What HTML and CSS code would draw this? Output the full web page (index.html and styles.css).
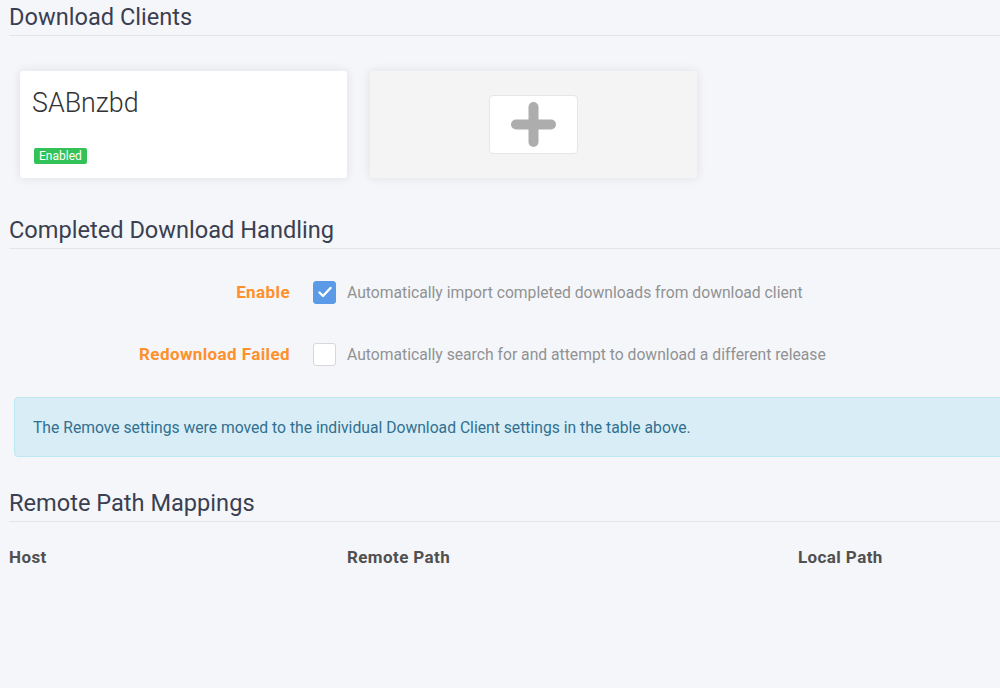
FILE: index.html
```html
<!DOCTYPE html>
<html>
<head>
<meta charset="utf-8">
<link rel="stylesheet" href="styles.css">
</head>
<body>
<div class="page">
  <section class="section">
    <h2 class="legend">Download Clients</h2>
    <div class="cards">
      <div class="card">
        <div class="card-name">SABnzbd</div>
        <span class="badge">Enabled</span>
      </div>
      <div class="card card-add">
        <div class="add-btn">
          <svg width="45" height="45" viewBox="0 0 45 45"><path d="M22.5 5 V40 M5 22.5 H40" stroke="#adadad" stroke-width="10" stroke-linecap="round" fill="none"/></svg>
        </div>
      </div>
    </div>
  </section>

  <section class="section">
    <h2 class="legend">Completed Download Handling</h2>
    <div class="form">
      <div class="row">
        <label class="label">Enable</label>
        <span class="check checked">
          <svg width="14" height="12" viewBox="0 0 14 12"><path d="M1.5 6.5 L5 10 L12.5 2" stroke="#fff" stroke-width="2.4" fill="none" stroke-linecap="round" stroke-linejoin="round"/></svg>
        </span>
        <span class="help">Automatically import completed downloads from download client</span>
      </div>
      <div class="row">
        <label class="label">Redownload Failed</label>
        <span class="check"></span>
        <span class="help">Automatically search for and attempt to download a different release</span>
      </div>
    </div>
    <div class="alert">The Remove settings were moved to the individual Download Client settings in the table above.</div>
  </section>

  <section class="section">
    <h2 class="legend">Remote Path Mappings</h2>
    <div class="table-head">
      <div class="th th-host">Host</div>
      <div class="th th-remote">Remote Path</div>
      <div class="th th-local">Local Path</div>
    </div>
  </section>
</div>
</body>
</html>
```

FILE: styles.css
```css
html, body {
  margin: 0;
  padding: 0;
  background: #f5f6fa;
  overflow: hidden;
}
body {
  font-family: Roboto, "Open Sans", sans-serif;
  color: #515253;
}
.page {
  padding-left: 9px;
  width: 1100px;
}
.legend {
  margin: 0;
  font-size: 23.6px;
  font-weight: 400;
  color: #3a3f51;
  line-height: 34px;
  border-bottom: 1px solid #e3e4e6;
  height: 36px;
  box-sizing: border-box;
}
.cards {
  display: flex;
  gap: 23px;
  padding: 35px 0 0 11px;
  height: 107px;
}
.card {
  width: 327px;
  height: 107px;
  box-sizing: border-box;
  background: #fff;
  border-radius: 3px;
  box-shadow: 0 0 10px 1px rgba(0,0,0,0.08);
  padding: 17px 12px 0 12px;
  position: relative;
}
.card-name {
  font-size: 26.8px;
  font-weight: 300;
  color: #333;
  line-height: 30px;
}
.badge {
  position: absolute;
  left: 14px;
  top: 77px;
  background: #33c257;
  color: #fff;
  font-size: 12px;
  line-height: 16px;
  padding: 0 5px;
  border-radius: 2px;
}
.card-add {
  background: #f4f4f4;
  display: flex;
  align-items: center;
  justify-content: center;
  padding: 0;
}
.add-btn {
  width: 89px;
  height: 59px;
  box-sizing: border-box;
  background: #fff;
  border: 1px solid #e6e6e6;
  border-radius: 4px;
  display: flex;
  align-items: center;
  justify-content: center;
}
.section:nth-child(2) { margin-top: 35px; }
.section:nth-child(3) { margin-top: 29px; }
.form {
  padding-top: 31px;
}
.row {
  display: flex;
  align-items: center;
  height: 24px;
  margin-bottom: 38px;
}
.row:last-child { margin-bottom: 0; }
.label {
  width: 281px;
  text-align: right;
  font-weight: 700;
  color: #ff902b;
  font-size: 17px;
  letter-spacing: 0.4px;
  margin-right: 23px;
}
.check {
  width: 23px;
  height: 23px;
  box-sizing: border-box;
  border: 1px solid #d6d8dc;
  border-radius: 3px;
  background: #fff;
  display: flex;
  align-items: center;
  justify-content: center;
  margin-right: 11px;
}
.check.checked {
  background: #5b9ae7;
  border-color: #5b9ae7;
}
.help {
  color: #909293;
  font-size: 15.7px;
}
.alert {
  margin: 31px -30px 0 5px;
  height: 60px;
  box-sizing: border-box;
  background: #d9edf7;
  border: 1px solid #bce8f1;
  border-radius: 4px;
  color: #31708f;
  font-size: 15.7px;
  padding: 0 18px;
  display: flex;
  align-items: center;
}
.table-head {
  display: flex;
  padding-top: 25px;
  font-weight: 700;
  font-size: 17px;
  letter-spacing: 0.4px;
  color: #505050;
}
.th-host { width: 338px; }
.th-remote { width: 451px; }
```
